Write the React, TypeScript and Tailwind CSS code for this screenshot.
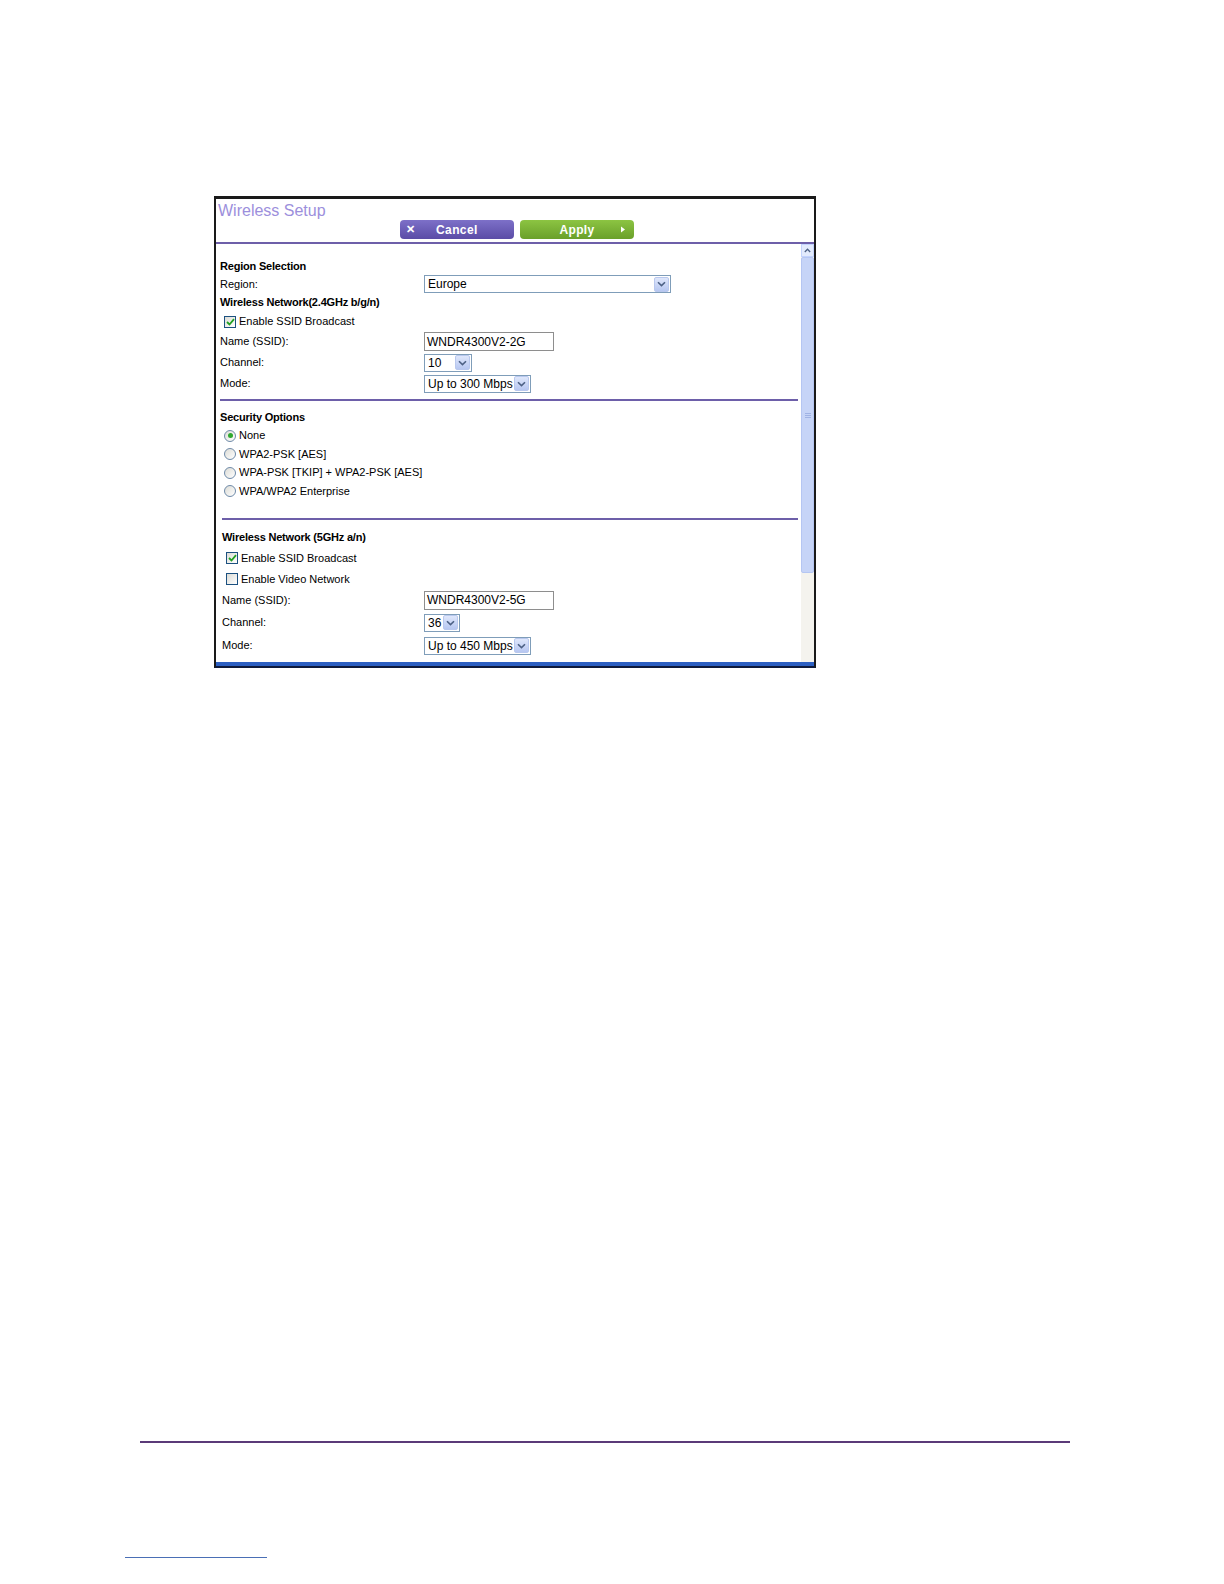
import { useState } from 'react';

const FONT = { fontFamily: '"Liberation Sans", Arial, sans-serif' };

function Arrow() {
  return (
    <span className="flex h-[15px] w-[15px] items-center justify-center rounded-[2px] border border-[#b9c8ee] bg-gradient-to-b from-[#dfe7fb] to-[#b7c7f1]">
      <svg width="9" height="6" viewBox="0 0 9 6">
        <path d="M1 1.2 L4.5 4.6 L8 1.2" fill="none" stroke="#4d6185" strokeWidth="1.6" />
      </svg>
    </span>
  );
}

function Select({ value, width }: { value: string; width: string }) {
  return (
    <div className={`flex h-[18px] items-center justify-between border border-[#7f9db9] bg-white pl-[3px] pr-[1px] ${width}`}>
      <span className="text-[12px] leading-none text-black">{value}</span>
      <Arrow />
    </div>
  );
}

function TextBox({ value }: { value: string }) {
  return (
    <div className="flex h-[19px] w-[130px] items-center border border-[#8e8e8e] bg-white px-[2px]">
      <span className="text-[12px] leading-none text-black">{value}</span>
    </div>
  );
}

function Check({ checked }: { checked: boolean }) {
  return (
    <span className="flex h-[12px] w-[12px] items-center justify-center border border-[#1c5180] bg-gradient-to-br from-[#dcdcd6] to-white">
      {checked && (
        <svg width="9" height="8" viewBox="0 0 9 8">
          <path d="M1 4 L3.5 6.5 L8 1.2" fill="none" stroke="#21a121" strokeWidth="1.8" />
        </svg>
      )}
    </span>
  );
}

function Radio({ checked }: { checked: boolean }) {
  return (
    <span className="flex h-[12px] w-[12px] items-center justify-center rounded-full border border-[#6e8aa8] bg-gradient-to-br from-[#dcdcd6] to-white">
      {checked && <span className="h-[5px] w-[5px] rounded-full bg-[#2fa82f]" />}
    </span>
  );
}

function Row({ h, label, children, shift }: { h: string; label?: string; children?: React.ReactNode; shift?: boolean }) {
  return (
    <div className={`flex items-center ${h}`}>
      <div className={`${shift ? 'w-[204px] pl-[2px]' : 'w-[204px]'} text-[11px] text-black`}>{label}</div>
      {children}
    </div>
  );
}

function Heading({ h, text, shift }: { h: string; text: string; shift?: boolean }) {
  return (
    <div className={`flex items-center ${h} ${shift ? 'pl-[2px]' : ''} text-[11px] font-bold tracking-[-0.2px] text-black`}>
      {text}
    </div>
  );
}

function Option({ h, checked, text, radio, pl }: { h: string; checked: boolean; text: string; radio?: boolean; pl: string }) {
  return (
    <div className={`flex items-center gap-[3px] ${h} ${pl} text-[11px] text-black`}>
      {radio ? <Radio checked={checked} /> : <Check checked={checked} />}
      <span>{text}</span>
    </div>
  );
}

export default function App() {
  const [security] = useState('None');
  const options = ['None', 'WPA2-PSK [AES]', 'WPA-PSK [TKIP] + WPA2-PSK [AES]', 'WPA/WPA2 Enterprise'];
  const optionHeights = ['h-[19px]', 'h-[18px]', 'h-[19px]', 'h-[18px]'];

  return (
    <div className="relative h-[1584px] w-[1224px] bg-white" style={FONT}>
      <div className="pl-[214px] pt-[196px]">
        {/* router frame */}
        <div className="flex h-[472px] w-[602px] flex-col border-x-2 border-t-[3px] border-b-[2px] border-x-[#1a1a1a] border-t-[#1a1a1a] border-b-[#0e1a3c] bg-white">
          {/* header */}
          <div className="relative h-[43px] shrink-0">
            <div className="pl-[2px] pt-[2px] text-[16px] leading-[19px] text-[#9c8fdc]">Wireless Setup</div>
            <div className="absolute left-[184px] top-[21px] flex gap-[6px]">
              <div className="flex h-[19px] w-[114px] items-center rounded-[4px] bg-gradient-to-b from-[#7d70c8] to-[#5b4ca6] pl-[6px] text-[12px] font-bold text-white">
                <span className="w-[30px] text-[11px]">✕</span>
                <span className="tracking-[0.4px]">Cancel</span>
              </div>
              <div className="relative flex h-[19px] w-[114px] items-center justify-center rounded-[4px] bg-gradient-to-b from-[#8cc442] to-[#6aa02a] text-[12px] font-bold tracking-[0.3px] text-white">
                <span>Apply</span>
                <svg className="absolute right-[8px] top-[6px]" width="6" height="7" viewBox="0 0 6 7"><path d="M1 0.5 L5 3.5 L1 6.5Z" fill="#ffffff" /></svg>
              </div>
            </div>
          </div>
          <div className="h-[2px] shrink-0 bg-[#6d5fa9]" />

          {/* scroll area */}
          <div className="flex min-h-0 flex-1">
            <div className="flex-1 pl-[4px] pr-[3px]">
              <div className="h-[13px]" />
              <Heading h="h-[18px]" text="Region Selection" />
              <Row h="h-[18px]" label="Region:">
                <Select value="Europe" width="w-[247px]" />
              </Row>
              <Heading h="h-[19px]" text="Wireless Network(2.4GHz b/g/n)" />
              <Option h="h-[19px]" checked text="Enable SSID Broadcast" pl="pl-[4px]" />
              <Row h="h-[21px]" label="Name (SSID):">
                <TextBox value="WNDR4300V2-2G" />
              </Row>
              <Row h="h-[21px]" label="Channel:">
                <Select value="10" width="w-[48px]" />
              </Row>
              <Row h="h-[21px]" label="Mode:">
                <Select value="Up to 300 Mbps" width="w-[107px]" />
              </Row>
              <div className="h-[5px]" />
              <div className="h-[2px] bg-[#6d5fa9]" />

              <div className="h-[7px]" />
              <Heading h="h-[18px]" text="Security Options" />
              {options.map((o, i) => (
                <Option key={o} h={optionHeights[i]} radio checked={security === o} text={o} pl="pl-[4px]" />
              ))}
              <div className="h-[18px]" />
              <div className="ml-[2px] h-[2px] bg-[#6d5fa9]" />

              <div className="h-[8px]" />
              <Heading h="h-[19px]" text="Wireless Network (5GHz a/n)" shift />
              <Option h="h-[22px]" checked text="Enable SSID Broadcast" pl="pl-[6px]" />
              <Option h="h-[20px]" checked={false} text=" Enable Video Network" pl="pl-[6px]" />
              <Row h="h-[22px]" label="Name (SSID):" shift>
                <TextBox value="WNDR4300V2-5G" />
              </Row>
              <Row h="h-[23px]" label="Channel:" shift>
                <Select value="36" width="w-[36px]" />
              </Row>
              <Row h="h-[23px]" label="Mode:" shift>
                <Select value="Up to 450 Mbps" width="w-[107px]" />
              </Row>
            </div>

            {/* scrollbar */}
            <div className="flex w-[13px] shrink-0 flex-col bg-[#f4f3ee]">
              <div className="flex h-[13px] items-center justify-center border border-[#c3d3fd] bg-[#e3ebfd]">
                <svg width="7" height="5" viewBox="0 0 7 5"><path d="M0.8 4 L3.5 1.2 L6.2 4" fill="none" stroke="#4d6185" strokeWidth="1.3" /></svg>
              </div>
              <div className="flex h-[316px] items-center justify-center rounded-[2px] border border-[#b5c6f2] bg-[#c6d4f7]">
                <div className="flex flex-col gap-[1px]">
                  <div className="h-px w-[6px] bg-[#9fb2e4]" />
                  <div className="h-px w-[6px] bg-[#9fb2e4]" />
                  <div className="h-px w-[6px] bg-[#9fb2e4]" />
                </div>
              </div>
              <div className="flex-1" />
            </div>
          </div>
          <div className="h-[4px] shrink-0 bg-[#2c5fc2]" />
        </div>
      </div>

      {/* page footer rule */}
      <div className="ml-[140px] mt-[773px] h-[2px] w-[930px] bg-[#5b3a78]" />
      <div className="ml-[125px] mt-[114px] h-px w-[142px] bg-[#4a6fb5]" />
    </div>
  );
}
